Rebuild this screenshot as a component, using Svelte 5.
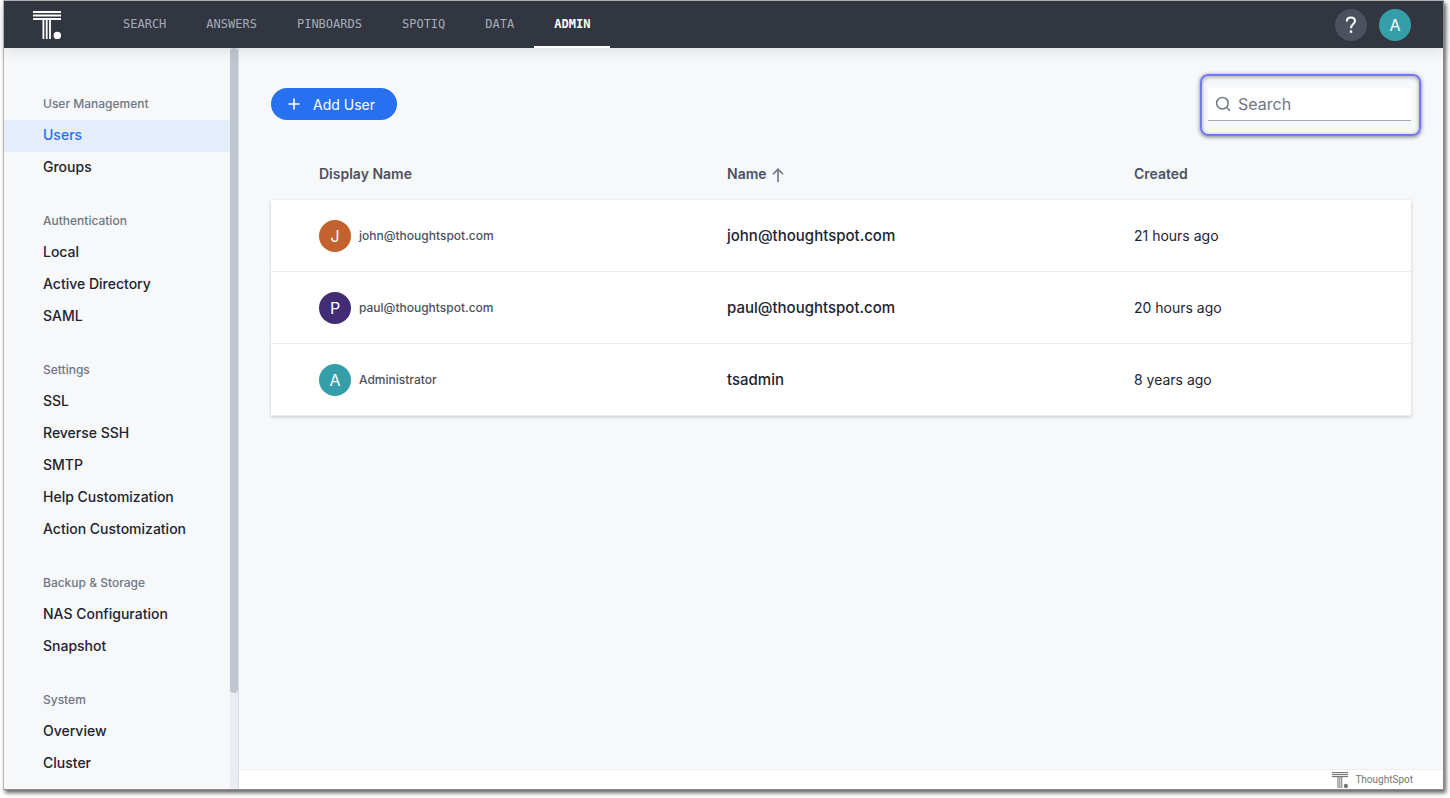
<script>
  const tabs = ['SEARCH', 'ANSWERS', 'PINBOARDS', 'SPOTIQ', 'DATA', 'ADMIN'];
  const activeTab = 'ADMIN';

  const groups = [
    { title: 'User Management', items: ['Users', 'Groups'] },
    { title: 'Authentication', items: ['Local', 'Active Directory', 'SAML'] },
    {
      title: 'Settings',
      items: ['SSL', 'Reverse SSH', 'SMTP', 'Help Customization', 'Action Customization']
    },
    { title: 'Backup & Storage', items: ['NAS Configuration', 'Snapshot'] },
    { title: 'System', items: ['Overview', 'Cluster'] }
  ];

  const users = [
    { display: 'john@thoughtspot.com', name: 'john@thoughtspot.com', created: '21 hours ago', color: '#c4622f' },
    { display: 'paul@thoughtspot.com', name: 'paul@thoughtspot.com', created: '20 hours ago', color: '#422c74' },
    { display: 'Administrator', name: 'tsadmin', created: '8 years ago', color: '#359fa9' }
  ];

  let activeItem = $state('Users');
  let query = $state('');

  let visibleUsers = $derived(
    users.filter((u) => (u.display + u.name).toLowerCase().includes(query.toLowerCase()))
  );
</script>

{#snippet logo()}
  <svg class="logo" viewBox="0 0 28 28" fill="currentColor" aria-hidden="true">
    <rect x="0" y="0" width="28" height="2" />
    <rect x="0" y="3.5" width="28" height="2" />
    <rect x="0" y="7" width="28" height="2" />
    <rect x="9.5" y="8" width="1.8" height="20" />
    <rect x="12.8" y="8" width="1.8" height="20" />
    <rect x="16.1" y="8" width="1.8" height="20" />
    <circle cx="24.3" cy="24.4" r="3.7" />
  </svg>
{/snippet}

<div class="window">
  <header class="topbar">
    <a href="#home" class="brand" aria-label="Home">{@render logo()}</a>
    <nav class="tabs">
      {#each tabs as tab}
        <a href="#{tab.toLowerCase()}" class="tab" class:active={tab === activeTab}>{tab}</a>
      {/each}
    </nav>
    <button class="round help" aria-label="Help">
      <svg width="12" height="18" viewBox="0 0 12 18" fill="none" stroke="currentColor" stroke-width="2">
        <path d="M1.8 5.4C1.8 2.9 3.5 1.5 5.9 1.5c2.4 0 4.1 1.4 4.1 3.6C10 8.2 6 8 6 12.2" />
        <path d="M6 14.4v2.4" stroke-width="2.4" />
      </svg>
    </button>
    <button class="round profile" aria-label="Profile">A</button>
  </header>

  <div class="body">
    <aside class="sidebar">
      <nav class="menu">
        {#each groups as group}
          <section>
            <h2>{group.title}</h2>
            <ul>
              {#each group.items as item}
                <li>
                  <a
                    href="#{item.toLowerCase().replace(/ /g, '-')}"
                    class:active={item === activeItem}
                    onclick={() => (activeItem = item)}>{item}</a
                  >
                </li>
              {/each}
            </ul>
          </section>
        {/each}
      </nav>
      <div class="track"><div class="thumb"></div></div>
    </aside>

    <div class="content">
      <main>
        <div class="toolbar">
          <button class="add">
            <svg width="12" height="12" viewBox="0 0 12 12" stroke="currentColor" stroke-width="1.6">
              <path d="M6 0.5v11M0.5 6h11" />
            </svg>
            Add User
          </button>
          <label class="search">
            <svg width="16" height="16" viewBox="0 0 16 16" fill="none" stroke="currentColor" stroke-width="1.5">
              <circle cx="7.4" cy="7.2" r="5.8" />
              <path d="M11.4 11.2l3.6 3.6" />
            </svg>
            <input type="text" placeholder="Search" aria-label="Search" bind:value={query} />
          </label>
        </div>

        <table>
          <thead>
            <tr>
              <th class="col-display">Display Name</th>
              <th class="col-name">
                Name
                <svg width="12" height="14" viewBox="0 0 12 14" fill="none" stroke="currentColor" stroke-width="1.6">
                  <path d="M6 14V1.4M1 6.2l5-5 5 5" />
                </svg>
              </th>
              <th>Created</th>
            </tr>
          </thead>
          <tbody>
            {#each visibleUsers as user (user.name)}
              <tr>
                <td>
                  <div class="user">
                    <span class="avatar" style="background: {user.color}">{user.display[0].toUpperCase()}</span>
                    {user.display}
                  </div>
                </td>
                <td class="name">{user.name}</td>
                <td>{user.created}</td>
              </tr>
            {/each}
          </tbody>
        </table>
      </main>

      <footer>
        {@render logo()}
        <span>ThoughtSpot</span>
      </footer>
    </div>
  </div>
</div>

<style>
  :global(body) {
    margin: 0;
    background: #fff;
  }

  .window {
    box-sizing: border-box;
    display: flex;
    flex-direction: column;
    height: calc(100vh - 8px);
    margin: 0 6px 8px 3px;
    border: 1px solid #b5b6b6;
    border-right-color: #8c8c8c;
    border-bottom-color: #8c8c8c;
    box-shadow: 2px 3px 4px rgba(0, 0, 0, 0.6);
    background: #f6f8fa;
    color: #1d232f;
    font-family: Inter, 'Liberation Sans', sans-serif;
    font-size: 14px;
  }

  a {
    color: inherit;
    text-decoration: none;
  }

  button {
    border: 0;
    padding: 0;
    font: inherit;
    cursor: pointer;
  }

  .topbar {
    position: relative;
    display: flex;
    align-items: center;
    flex: none;
    height: 47px;
    padding: 0 32px 0 29px;
    background: #323641;
    box-shadow: 0 2px 16px rgba(50, 54, 65, 0.14);
  }

  .brand {
    color: #fff;
  }

  .logo {
    display: block;
    flex: none;
    width: 28px;
    height: 28px;
  }

  .tabs {
    display: flex;
    align-self: stretch;
    flex: 1;
    margin-left: 42px;
  }

  .tab {
    box-sizing: border-box;
    padding: 0 20px;
    border-bottom: 2px solid transparent;
    color: #a5acb9;
    font-family: 'DejaVu Sans Mono', monospace;
    font-size: 12px;
    line-height: 46px;
  }

  .tab.active {
    border-color: #fff;
    color: #fff;
    font-weight: bold;
  }

  .round {
    display: flex;
    align-items: center;
    justify-content: center;
    width: 32px;
    height: 32px;
    margin-left: 12px;
    border-radius: 50%;
    color: #fff;
    font-size: 16px;
  }

  .help {
    background: #4c515f;
  }

  .profile {
    background: #359fa9;
  }

  .body {
    display: flex;
    flex: 1;
    min-height: 0;
  }

  .sidebar {
    display: flex;
    flex: none;
    width: 234px;
    border-right: 1px solid #d8dbe3;
  }

  .menu {
    flex: 1;
    overflow: hidden;
    padding-top: 19px;
  }

  h2 {
    margin: 0;
    padding: 27px 0 6px 39px;
    color: #6f7686;
    font-size: 12px;
    font-weight: 500;
    line-height: 20px;
  }

  ul {
    margin: 0;
    padding: 0;
    list-style: none;
  }

  li a {
    display: block;
    padding: 0 0 2px 39px;
    font-weight: 500;
    line-height: 30px;
  }

  li a.active {
    background: #e5edfd;
    color: #2770ef;
  }

  .track {
    width: 8px;
    background: #eaedf2;
  }

  .thumb {
    height: 87%;
    border-radius: 4px;
    background: #c0c6cf;
  }

  .content {
    display: flex;
    flex-direction: column;
    flex: 1;
    min-width: 0;
  }

  main {
    flex: 1;
    padding: 40px 32px;
  }

  .toolbar {
    display: flex;
    justify-content: space-between;
  }

  .add {
    display: flex;
    align-items: center;
    gap: 13px;
    height: 32px;
    padding: 0 22px 0 17px;
    border-radius: 16px;
    background: #2770ef;
    color: #fff;
  }

  .search {
    position: relative;
    box-sizing: border-box;
    display: flex;
    align-items: center;
    gap: 7px;
    width: 203px;
    height: 33px;
    padding: 0 7px;
    border-bottom: 1px solid #a5acb9;
    background: #fff;
    color: #6f7686;
  }

  .search svg {
    flex: none;
  }

  /* highlight frame around the search box */
  .search::after {
    content: '';
    position: absolute;
    inset: -14px -10px -16px -8px;
    border: 2px solid #7177f8;
    border-radius: 8px;
    box-shadow: 0 1px 4px rgba(0, 0, 0, 0.5), inset 0 1px 4px rgba(0, 0, 0, 0.35);
    pointer-events: none;
  }

  input {
    width: 100%;
    min-width: 0;
    padding: 0;
    border: 0;
    outline: 0;
    background: none;
    color: #1d232f;
    font: inherit;
    font-size: 16px;
  }

  input::placeholder {
    color: #6f7686;
    opacity: 1;
  }

  table {
    width: 100%;
    margin-top: 26px;
    border-spacing: 0;
    table-layout: fixed;
  }

  th {
    height: 53px;
    padding: 0;
    color: #4c515f;
    font-weight: 600;
    text-align: left;
  }

  th svg {
    margin-left: 2px;
    vertical-align: -3px;
    color: #6f7686;
  }

  .col-display {
    width: 40%;
  }

  .col-name {
    width: 35.7%;
  }

  .col-display,
  td:first-child {
    box-sizing: border-box;
    padding-left: 48px;
  }

  tbody {
    background: #fff;
    box-shadow: 0 1px 3px rgba(50, 54, 65, 0.25);
  }

  td {
    height: 71px;
    padding: 0;
    border-bottom: 1px solid #eaedf2;
  }

  .user {
    display: flex;
    align-items: center;
    gap: 8px;
    color: #4c515f;
    font-size: 12px;
    font-weight: 500;
  }

  .avatar {
    width: 32px;
    border-radius: 50%;
    color: #fff;
    font-size: 16px;
    font-weight: 400;
    line-height: 32px;
    text-align: center;
  }

  .name {
    font-size: 15px;
    font-weight: 500;
  }

  footer {
    display: flex;
    align-items: center;
    justify-content: flex-end;
    gap: 7px;
    height: 19px;
    padding-right: 30px;
    border-top: 1px solid #eaedf2;
    background: #fff;
    color: #777;
    font-family: Roboto, sans-serif;
    font-size: 10px;
    line-height: 19px;
  }

  footer .logo {
    width: 16px;
    height: 16px;
  }
</style>
